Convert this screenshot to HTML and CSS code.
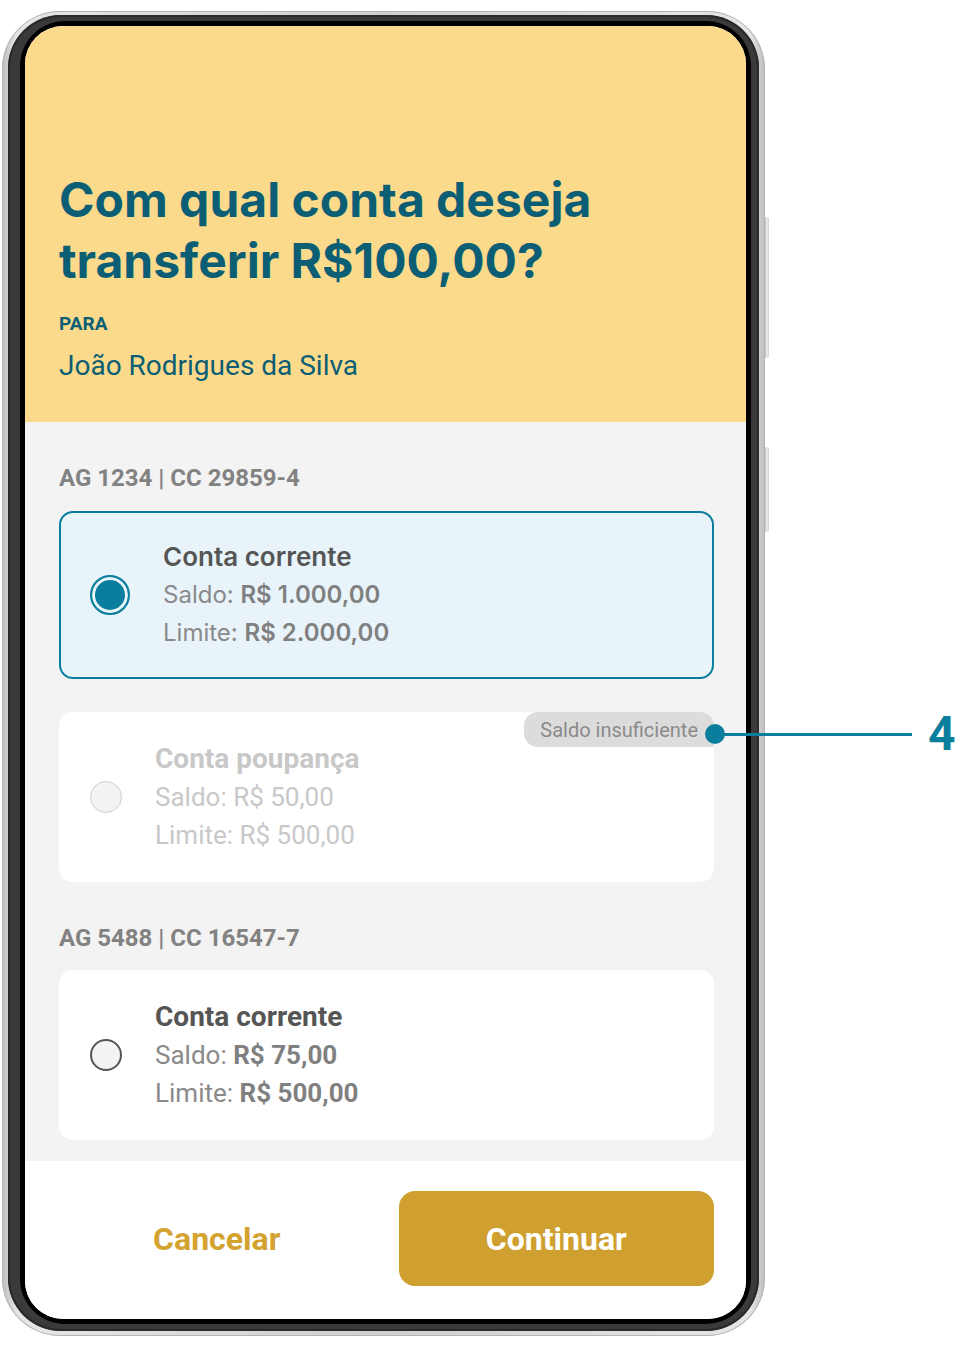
FILE: index.html
```html
<!DOCTYPE html><html lang="pt-BR">
<head>
  <meta charset="UTF-8" />
  <meta name="viewport" content="width=device-width, initial-scale=1.0" />
  <title>Transferência - Escolher conta</title>
  <link rel="stylesheet" href="styles.css">
</head>
<body>
  <div class="stage">
    <div class="phone">
      <span class="side-btn side-btn-1"></span>
      <span class="side-btn side-btn-2"></span>
      <div class="bezel">
        <div class="rim">
          <div class="screen">
            <header class="hero">
              <h1>Com qual conta deseja transferir R$100,00?</h1>
              <div class="to-label">PARA</div>
              <div class="to-name">João Rodrigues da Silva</div>
            </header>

            <main class="accounts">
              <div class="branch">AG 1234 | CC 29859-4</div>
              <div class="card selected">
                <span class="radio"></span>
                <div class="info">
                  <div class="kind">Conta corrente</div>
                  <div class="line">Saldo: <b>R$ 1.000,00</b></div>
                  <div class="line">Limite: <b>R$ 2.000,00</b></div>
                </div>
              </div>
              <div class="card disabled">
                <span class="badge">Saldo insuficiente</span>
                <span class="radio"></span>
                <div class="info">
                  <div class="kind">Conta poupança</div>
                  <div class="line">Saldo: R$ 50,00</div>
                  <div class="line">Limite: R$ 500,00</div>
                </div>
              </div>

              <div class="branch second">AG 5488 | CC 16547-7</div>
              <div class="card">
                <span class="radio"></span>
                <div class="info">
                  <div class="kind">Conta corrente</div>
                  <div class="line">Saldo: <b>R$ 75,00</b></div>
                  <div class="line">Limite: <b>R$ 500,00</b></div>
                </div>
              </div>
            </main>

            <footer class="actions">
              <button class="btn-cancel">Cancelar</button>
              <button class="btn-next">Continuar</button>
            </footer>
          </div>
        </div>
      </div>
    </div>

    <div class="callout">
      <span class="callout-dot"></span>
      <span class="callout-line"></span>
      <span class="callout-num">4</span>
    </div>
  </div>
</body>
</html>
```

FILE: styles.css
```css
body {
  margin: 0;
  background: #fff;
  font-family: Roboto, "Liberation Sans", sans-serif;
}
.stage {
  position: relative;
  width: 960px;
  height: 1348px;
  padding: 11px 0 0 2px;
  box-sizing: border-box;
}

/* phone frame */
.phone {
  position: relative;
  width: 763px;
  padding: 4px 6px 5px 6px;
  box-sizing: border-box;
  border-radius: 58px;
  background: linear-gradient(90deg, #bdbdbd, #e6e6e6 2%, #cfcfcf 50%, #e6e6e6 98%, #bdbdbd);
  box-shadow: inset 0 0 0 1px #b5b5b5;
}
.bezel {
  padding: 6px 8px 7px 12px;
  border-radius: 53px;
  background: #3a3a3a;
  box-shadow: inset 0 0 0 2px #2a2a2a;
}
.rim {
  padding: 5px;
  border-radius: 45px;
  background: #000;
}
.screen {
  height: 1293px;
  border-radius: 38px;
  overflow: hidden;
  display: flex;
  flex-direction: column;
  background: #fff;
}
.side-btn {
  position: absolute;
  right: -4px;
  width: 5px;
  border-radius: 3px;
  background: linear-gradient(90deg, #a9a9a9, #eeeeee 60%, #cfcfcf);
}
.side-btn-1 { top: 206px; height: 141px; }
.side-btn-2 { top: 436px; height: 85px; }

/* header */
.hero {
  background: #fcda8c;
  padding: 143px 34px 40px;
  color: #0b5e73;
}
.hero h1 {
  margin: 0;
  font-family: Inter, Roboto, sans-serif;
  font-size: 48px;
  line-height: 61px;
  font-weight: 700;
  max-width: 560px;
}
.to-label {
  margin-top: 22px;
  font-size: 19px;
  line-height: 22px;
  font-weight: 700;
}
.to-name {
  margin-top: 15px;
  font-size: 28px;
  line-height: 32px;
}

/* account list */
.accounts {
  flex: 1;
  background: #f3f3f3;
  padding: 42px 32px 0 34px;
}
.branch {
  font-size: 24px;
  line-height: 28px;
  font-weight: 700;
  color: #828282;
  margin-bottom: 19px;
}
.branch.second {
  margin-top: 42px;
  margin-bottom: 18px;
}
.card {
  position: relative;
  display: flex;
  align-items: center;
  gap: 33px;
  padding: 26px 29px;
  border: 2px solid transparent;
  border-radius: 14px;
  background: #fff;
}
.card + .card {
  margin-top: 33px;
}
.radio {
  flex: none;
  width: 32px;
  height: 32px;
  box-sizing: border-box;
  border-radius: 50%;
  border: 2px solid #555;
  background: #f3f3f3;
}
.info {
  color: #8a8a8a;
}
.kind {
  font-size: 28px;
  line-height: 38px;
  font-weight: 700;
  color: #555;
}
.line {
  font-size: 26px;
  line-height: 38px;
}
.line b {
  color: #808080;
}

.card.selected {
  border-color: #0a7e9c;
  background: #e8f4fa;
  padding-top: 25px;
  padding-bottom: 25px;
}
.card.selected .info {
  font-family: Inter, Roboto, sans-serif;
}
.card.selected .kind {
  font-size: 26px;
  font-weight: 600;
}
.card.selected .line {
  font-size: 24px;
}
.card.selected .line b {
  font-weight: 600;
}
.card.selected .radio {
  width: 40px;
  height: 40px;
  border: 2px solid #0a7e9c;
  background: #0a7e9c;
  box-shadow: inset 0 0 0 3px #e8f4fa;
}

.card.disabled .radio {
  border-color: #cfcfcf;
  border-width: 1.5px;
}
.card.disabled .kind,
.card.disabled .info {
  color: #c8c8c8;
}
.badge {
  position: absolute;
  top: -2px;
  right: -2px;
  height: 35px;
  padding: 0 16px;
  display: flex;
  align-items: center;
  font-size: 20px;
  color: #8a8a8a;
  background: #dcdcdc;
  border-radius: 14px 14px 0 14px;
}

/* footer buttons */
.actions {
  display: grid;
  grid-template-columns: 1fr 1fr;
  gap: 24px;
  padding: 30px 32px 33px 34px;
  background: #fff;
}
.actions button {
  height: 95px;
  border: none;
  border-radius: 16px;
  font-family: Roboto, sans-serif;
  font-size: 32px;
  font-weight: 700;
  cursor: pointer;
}
.btn-cancel {
  background: transparent;
  color: #d4a22f;
}
.btn-next {
  background: #cf9f2f;
  color: #fff;
}

/* annotation */
.callout {
  position: absolute;
  left: 705px;
  top: 714px;
  height: 40px;
  display: flex;
  align-items: center;
}
.callout-dot {
  width: 20px;
  height: 20px;
  border-radius: 50%;
  background: #0a7e9c;
}
.callout-line {
  width: 197px;
  height: 3px;
  margin-left: -10px;
  background: #0a7e9c;
}
.callout-num {
  margin-left: 16px;
  font-size: 48px;
  font-weight: 700;
  color: #0a7e9c;
  line-height: 40px;
}
```
